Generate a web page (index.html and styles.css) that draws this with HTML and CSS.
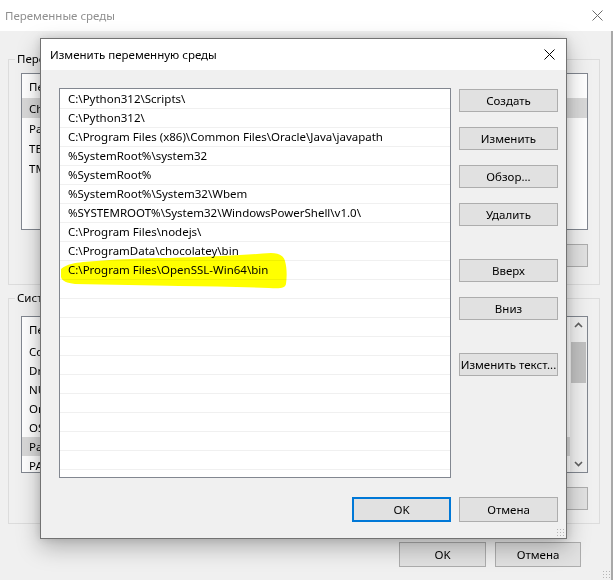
FILE: index.html
```html
<!DOCTYPE html>
<html lang="ru">
<head>
<meta charset="utf-8">
<title>Переменные среды</title>
<link rel="stylesheet" href="styles.css">
</head>
<body>
<div class="screen">
  <div class="bgwin">
    <div class="bg-titlebar">
      <span class="bg-title">Переменные среды</span>
      <svg class="bg-close" width="11" height="11" viewBox="0 0 11 11"><path d="M0.5 0.5 L10.5 10.5 M10.5 0.5 L0.5 10.5" stroke="#6a6a6a" stroke-width="1" fill="none"/></svg>
    </div>
    <div class="bg-body">
      <div class="group g1">
        <span class="legend">Переменные среды пользователя для User</span>
        <div class="lv lv1">
          <div class="lv-head"><span class="col1">Переменная</span><span>Значение</span></div>
          <div class="lv-row sel"><span class="col1">ChocolateyLastPathUpdate</span><span>133468723466384051</span></div>
          <div class="lv-row"><span class="col1">Path</span><span>C:\Users\User\AppData\Local\Microsoft\WindowsApps;</span></div>
          <div class="lv-row"><span class="col1">TEMP</span><span>C:\Users\User\AppData\Local\Temp</span></div>
          <div class="lv-row"><span class="col1">TMP</span><span>C:\Users\User\AppData\Local\Temp</span></div>
        </div>
        <div class="btnrow">
          <button class="wbtn bgbtn">Создать...</button>
          <button class="wbtn bgbtn">Изменить...</button>
          <button class="wbtn bgbtn">Удалить</button>
        </div>
      </div>
      <div class="group g2">
        <span class="legend">Системные переменные</span>
        <div class="lv lv2">
          <div class="lv-main">
            <div class="lv-head"><span class="col1">Переменная</span><span>Значение</span></div>
            <div class="lv-row"><span class="col1">ComSpec</span><span>C:\Windows\system32\cmd.exe</span></div>
            <div class="lv-row"><span class="col1">DriverData</span><span>C:\Windows\System32\Drivers\DriverData</span></div>
            <div class="lv-row"><span class="col1">NUMBER_OF_PROCESSORS</span><span>8</span></div>
            <div class="lv-row"><span class="col1">OnlineServices</span><span>Online Services</span></div>
            <div class="lv-row"><span class="col1">OS</span><span>Windows_NT</span></div>
            <div class="lv-row sel"><span class="col1">Path</span><span>C:\Python312\Scripts\;C:\Python312\;</span></div>
            <div class="lv-row"><span class="col1">PATHEXT</span><span>.COM;.EXE;.BAT;.CMD;.VBS</span></div>
          </div>
          <div class="vscroll">
            <svg class="arrow" width="17" height="17" viewBox="0 0 17 17"><path d="M5 10 L8.5 6.5 L12 10" stroke="#606060" stroke-width="1.6" fill="none"/></svg>
            <div class="track"><div class="thumb"></div></div>
            <svg class="arrow" width="17" height="17" viewBox="0 0 17 17"><path d="M5 7 L8.5 10.5 L12 7" stroke="#606060" stroke-width="1.6" fill="none"/></svg>
          </div>
        </div>
        <div class="btnrow">
          <button class="wbtn bgbtn">Создать...</button>
          <button class="wbtn bgbtn">Изменить...</button>
          <button class="wbtn bgbtn">Удалить</button>
        </div>
      </div>
      <div class="footer">
        <button class="wbtn ftbtn ok-bg">OK</button>
        <button class="wbtn ftbtn cancel-bg">Отмена</button>
      </div>
      <div class="bg-grip"></div>
    </div>
  </div>

  <div class="dialog">
    <div class="dlg-titlebar">
      <span class="dlg-title">Изменить переменную среды</span>
      <svg class="dlg-close" width="11" height="11" viewBox="0 0 11 11"><path d="M0.5 0.5 L10.5 10.5 M10.5 0.5 L0.5 10.5" stroke="#000" stroke-width="1" fill="none"/></svg>
    </div>
    <div class="dlg-body">
      <div class="pathlist">
        <div class="prow">C:\Python312\Scripts\</div>
        <div class="prow">C:\Python312\</div>
        <div class="prow">C:\Program Files (x86)\Common Files\Oracle\Java\javapath</div>
        <div class="prow">%SystemRoot%\system32</div>
        <div class="prow">%SystemRoot%</div>
        <div class="prow">%SystemRoot%\System32\Wbem</div>
        <div class="prow">%SYSTEMROOT%\System32\WindowsPowerShell\v1.0\</div>
        <div class="prow">C:\Program Files\nodejs\</div>
        <div class="prow">C:\ProgramData\chocolatey\bin</div>
        <div class="prow">C:\Program Files\OpenSSL-Win64\bin</div>
        <div class="prow"></div><div class="prow"></div><div class="prow"></div>
        <div class="prow"></div><div class="prow"></div><div class="prow"></div>
        <div class="prow"></div><div class="prow"></div><div class="prow"></div>
        <div class="prow"></div><div class="prow"></div>
        <svg class="marker" width="392" height="390" viewBox="0 0 392 390"><path d="M2 181 C8 176 16 175 24 174 C50 172 80 170 110 170 C150 169 185 167 212 165 C220 165 225 168 226 173 C228 180 228 189 227 196 C226 200 222 201 210 200 C180 199 150 198 120 198 C90 197 50 197 16 196 C8 195 3 193 2 189 Z" fill="#ffff00"/></svg>
      </div>
      <div class="dlg-btns">
        <button class="wbtn dbtn">Создать</button>
        <button class="wbtn dbtn">Изменить</button>
        <button class="wbtn dbtn">Обзор...</button>
        <button class="wbtn dbtn">Удалить</button>
        <button class="wbtn dbtn sep">Вверх</button>
        <button class="wbtn dbtn">Вниз</button>
        <button class="wbtn dbtn sep">Изменить текст...</button>
      </div>
      <button class="wbtn okbtn">OK</button>
      <button class="wbtn cancelbtn">Отмена</button>
    </div>
    <div class="grip"></div>
  </div>
</div>
</body>
</html>
```

FILE: styles.css
```css
* { box-sizing: border-box; }
html, body { margin: 0; padding: 0; }
body {
  width: 613px;
  height: 580px;
  overflow: hidden;
  background: #f0f0f0;
  font-family: "Noto Sans", "Liberation Sans", sans-serif;
  font-size: 11.5px;
  color: #000;
}
.screen { position: relative; width: 613px; height: 580px; }
.bgwin { width: 613px; height: 580px; background: #f0f0f0; display: flex; flex-direction: column; }

.bg-titlebar {
  width: 613px;
  height: 31px;
  flex: none;
  background: #fff;
  display: flex;
  align-items: center;
  padding: 0 0 0 5px;
}
.bg-title { color: #8f8f8f; }
.bg-close { margin-left: auto; margin-right: 10px; }

.bg-body {
  flex: 1;
  display: flex;
  flex-direction: column;
  border-right: 2px solid #a8a8a8;
}
.group {
  margin-left: 8px;
  width: 592px;
  border: 1px solid #dcdcdc;
  padding: 0 11px 0 12px;
  display: flex;
  flex-direction: column;
}
.g1 { margin-top: 28px; padding-bottom: 17px; }
.g2 { margin-top: 13px; padding-bottom: 13px; }
.legend {
  display: block;
  width: fit-content;
  height: 16px;
  line-height: 16px;
  margin: -9px 0 0 -6px;
  padding: 0 2px;
  background: #f0f0f0;
}
.lv {
  height: 157px;
  background: #fff;
  border: 1px solid #828790;
  overflow: hidden;
}
.g1 .lv { margin-top: 6px; }
.g2 .lv { margin-top: 10px; display: flex; }
.lv-main { flex: 1; overflow: hidden; }
.lv-head {
  height: 24px;
  display: flex;
  align-items: center;
  padding-left: 7px;
  white-space: nowrap;
}
.lv-row {
  height: 20px;
  display: flex;
  align-items: center;
  padding-left: 7px;
  white-space: nowrap;
}
.lv2 .lv-head { height: 25px; }
.lv2 .lv-row { height: 19px; }
.lv-row.sel { background: #d9d9d9; }
.col1 { width: 170px; flex: none; overflow: hidden; }

.vscroll {
  width: 17px;
  flex: none;
  background: #f0f0f0;
  display: flex;
  flex-direction: column;
}
.arrow { display: block; flex: none; }
.track { flex: 1; padding: 8px 1px 0 1px; }
.thumb { height: 41px; background: #c1c1c1; }

.btnrow {
  display: flex;
  justify-content: flex-end;
  gap: 8px;
  margin-top: 14px;
}
.wbtn {
  font-family: inherit;
  font-size: 11.5px;
  color: #000;
  background: #e1e1e1;
  border: 1px solid #adadad;
  padding: 0;
  margin: 0;
  display: flex;
  align-items: center;
  justify-content: center;
  white-space: nowrap;
}
.bgbtn { width: 86px; height: 23px; }
.footer {
  display: flex;
  justify-content: flex-end;
  gap: 9px;
  margin-top: 18px;
  padding-right: 30px;
}
.ftbtn { height: 25px; }
.ok-bg { width: 87px; }
.cancel-bg { width: 86px; }
.bg-grip {
  align-self: flex-end;
  width: 8px;
  height: 8px;
  margin: 3px 1px 0 0;
  background-image: radial-gradient(circle, #b5b5b5 0.8px, transparent 1px);
  background-size: 3px 3px;
}

/* dialog */
.dialog {
  position: absolute;
  left: 40px;
  top: 38px;
  width: 527px;
  height: 501px;
  border: 1px solid #727272;
  background: #f0f0f0;
  box-shadow: 0 8px 22px rgba(0, 0, 0, 0.28), 0 0 8px rgba(0, 0, 0, 0.12);
}
.dlg-titlebar {
  height: 31px;
  background: #fff;
  display: flex;
  align-items: center;
  justify-content: space-between;
  padding: 0 11px 0 9px;
}
.dlg-body {
  display: grid;
  grid-template-columns: 392px 99px;
  column-gap: 8px;
  padding: 18px 7px 0 18px;
}
.pathlist {
  position: relative;
  height: 390px;
  background: #fff;
  border: 1px solid #828790;
  padding-top: 1px;
  overflow: hidden;
}
.prow {
  height: 19px;
  line-height: 18px;
  border-bottom: 1px solid #f0f0f0;
  padding-left: 8px;
  white-space: nowrap;
}
.marker {
  position: absolute;
  left: -1px;
  top: -1px;
  mix-blend-mode: multiply;
  pointer-events: none;
}
.dlg-btns { display: flex; flex-direction: column; }
.dbtn { width: 99px; height: 23px; margin-top: 15px; }
.dbtn:first-child { margin-top: 1px; }
.dbtn.sep { margin-top: 33px; }
.okbtn {
  justify-self: end;
  width: 99px;
  height: 25px;
  margin-top: 19px;
  border: 2px solid #0078d7;
}
.cancelbtn { width: 99px; height: 25px; margin-top: 19px; }
.grip {
  position: absolute;
  right: 2px;
  bottom: 2px;
  width: 8px;
  height: 8px;
  background-image: radial-gradient(circle, #b5b5b5 0.8px, transparent 1px);
  background-size: 3px 3px;
}
```
